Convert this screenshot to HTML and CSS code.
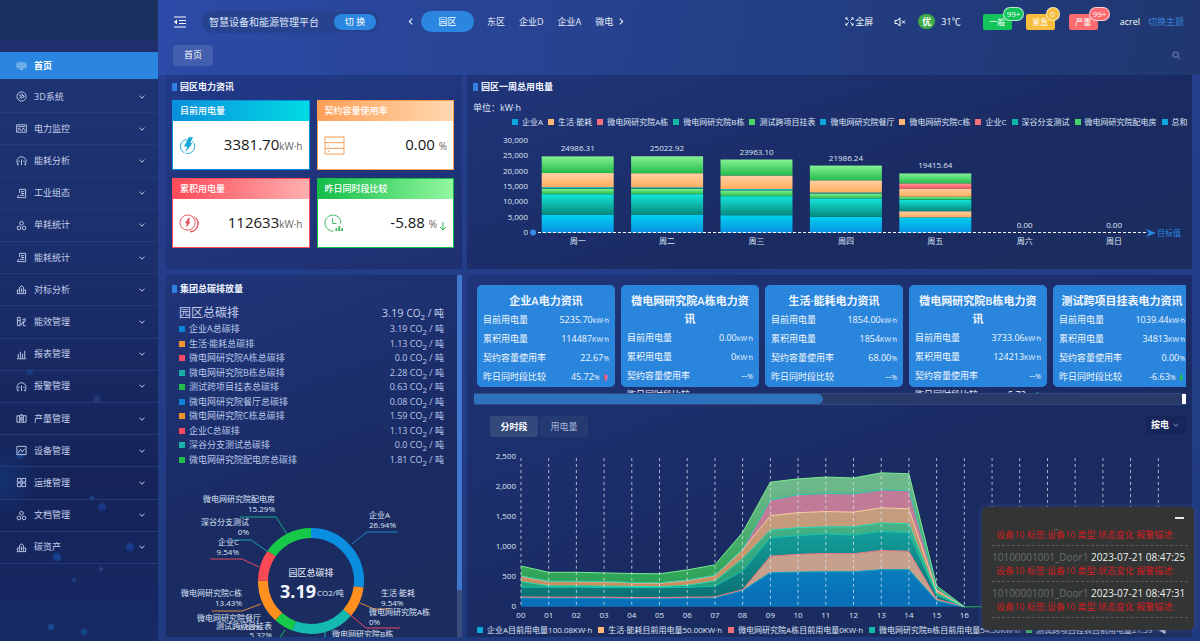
FILE: index.html
```html
<!DOCTYPE html>
<html lang="zh-CN">
<head>
<meta charset="utf-8">
<meta name="viewport" content="width=device-width, initial-scale=1">
<title>智慧设备和能源管理平台</title>
<link rel="stylesheet" href="styles.css">
</head>
<body>
<svg class="defs" aria-hidden="true">
  <symbol id="chev" viewBox="0 0 8 8"><path d="M1.5 2.8 4 5.2 6.500 2.800"/></symbol>
  <symbol id="i-home" viewBox="0 0 12 12"><circle cx="6" cy="6" r="1.500"/><circle cx="6" cy="6" r="3.200"/><path d="M2.300 9.500a5 5 0 0 1 0-7M9.700 9.500a5 5 0 0 0 0-7M4.500 10.500h3"/></symbol>
  <symbol id="i-3d" viewBox="0 0 12 12"><circle cx="6" cy="6" r="5"/><path d="M3 3.800 6 6 3 8.200M5.500 3.800 9 6 5.500 8.200M6 3l3 3"/></symbol>
  <symbol id="i-monitor" viewBox="0 0 12 12"><path d="M.7 2h10.600v8H.7zM2 4h8M2 8.500l2-2.500 2 2.500 2-3 2 3M2 6h1"/></symbol>
  <symbol id="i-gauge" viewBox="0 0 12 12"><path d="M2.500 10.500a5 5 0 1 1 7 0M6 5v6M3.500 6 3 8M8.500 6 9 8M1 10.500h2M9 10.500h2"/></symbol>
  <symbol id="i-doc" viewBox="0 0 12 12"><path d="M4 1.500h6.500v9H1.500L3 7.500M4 1.500v4M5.500 4H9M5.500 6H9M4.500 8H9"/></symbol>
  <symbol id="i-rings" viewBox="0 0 12 12"><circle cx="6" cy="3.500" r="2"/><circle cx="3.200" cy="8.700" r="2"/><circle cx="8.800" cy="8.700" r="2"/></symbol>
  <symbol id="i-people" viewBox="0 0 12 12"><path d="M4 10V3.500L6 2l2 1.500V10M1.500 10V6.500H4M10.500 10V6.500H8M1 10.500h10M6 5v4"/></symbol>
  <symbol id="i-effect" viewBox="0 0 12 12"><path d="M1.500 1.500h3v9h-3zM5 10.500 8.500 5M7 4l3-1v3l-2 1v3.500h2.500M1.500 5h3"/></symbol>
  <symbol id="i-bars" viewBox="0 0 12 12"><path d="M1 10.700h10M2.500 10V5.500M4.800 10V3M7.200 10V5M9.500 10V2"/></symbol>
  <symbol id="i-case" viewBox="0 0 12 12"><path d="M1 3h10v7H1zM4 3v7M8 3v7M5 1.700h2M5.200 5h1.600v3H5.200z"/></symbol>
  <symbol id="i-trend" viewBox="0 0 12 12"><path d="M1 1.500h10v9H1zM2.500 8.500l2.500-4 2 3 2.500-3.500"/></symbol>
  <symbol id="i-grid" viewBox="0 0 12 12"><path d="M1.500 1.500h4v4h-4zM6.500 1.500h4v4h-4zM1.500 6.500h4v4h-4zM6.500 6.500h4v4h-4z"/></symbol>
</svg>
<div class="app">
  <aside class="side">
    <div class="brand"></div>
    <a class="nav-home" href="#"><svg class="ico"><use href="#i-home"/></svg>首页</a>
    <nav class="menu" aria-label="主菜单">
      <a href="#"><svg class="ico"><use href="#i-3d"/></svg><span>3D系统</span><svg class="chev"><use href="#chev"/></svg></a>
      <a href="#"><svg class="ico"><use href="#i-monitor"/></svg><span>电力监控</span><svg class="chev"><use href="#chev"/></svg></a>
      <a href="#"><svg class="ico"><use href="#i-gauge"/></svg><span>能耗分析</span><svg class="chev"><use href="#chev"/></svg></a>
      <a href="#"><svg class="ico"><use href="#i-doc"/></svg><span>工业组态</span><svg class="chev"><use href="#chev"/></svg></a>
      <a href="#"><svg class="ico"><use href="#i-rings"/></svg><span>单耗统计</span><svg class="chev"><use href="#chev"/></svg></a>
      <a href="#"><svg class="ico"><use href="#i-doc"/></svg><span>能耗统计</span><svg class="chev"><use href="#chev"/></svg></a>
      <a href="#"><svg class="ico"><use href="#i-people"/></svg><span>对标分析</span><svg class="chev"><use href="#chev"/></svg></a>
      <a href="#"><svg class="ico"><use href="#i-effect"/></svg><span>能效管理</span><svg class="chev"><use href="#chev"/></svg></a>
      <a href="#"><svg class="ico"><use href="#i-bars"/></svg><span>报表管理</span><svg class="chev"><use href="#chev"/></svg></a>
      <a href="#"><svg class="ico"><use href="#i-gauge"/></svg><span>报警管理</span><svg class="chev"><use href="#chev"/></svg></a>
      <a href="#"><svg class="ico"><use href="#i-case"/></svg><span>产量管理</span><svg class="chev"><use href="#chev"/></svg></a>
      <a href="#"><svg class="ico"><use href="#i-trend"/></svg><span>设备管理</span><svg class="chev"><use href="#chev"/></svg></a>
      <a href="#"><svg class="ico"><use href="#i-grid"/></svg><span>运维管理</span><svg class="chev"><use href="#chev"/></svg></a>
      <a href="#"><svg class="ico"><use href="#i-rings"/></svg><span>文档管理</span><svg class="chev"><use href="#chev"/></svg></a>
      <a href="#"><svg class="ico"><use href="#i-people"/></svg><span>碳资产</span><svg class="chev"><use href="#chev"/></svg></a>
    </nav>
  </aside>

  <div class="main">
    <header class="top">
      <button class="plain" aria-label="折叠菜单"><svg class="burger" viewBox="0 0 14 12"><path d="M1 1h12M6 4.500h7M6 7.500h7M1 11h12"/><path class="solid" d="M4 3.500v5L1 6z"/></svg></button>
      <div class="platform"><span>智慧设备和能源管理平台</span><button class="switch">切 换</button></div>
      <div class="areas">
        <button class="plain" aria-label="上一个"><svg class="arrow" viewBox="0 0 8 8"><path d="M5.500 1.500 3 4l2.500 2.500"/></svg></button>
        <button class="area on">园区</button>
        <button class="area">东区</button>
        <button class="area">企业D</button>
        <button class="area">企业A</button>
        <button class="area cut">微电</button>
        <button class="plain" aria-label="下一个"><svg class="arrow" viewBox="0 0 8 8"><path d="M2.500 1.500 5 4 2.500 6.500"/></svg></button>
      </div>
      <div class="tools">
        <button class="plain full"><svg class="t-ico" viewBox="0 0 10 10"><path d="M1 3V1h2M7 1h2v2M1 7v2h2M7 9h2V7M1 1l3 3M9 1 6 4M1 9l3-3M9 9 6 6"/></svg>全屏</button>
        <button class="plain" aria-label="静音"><svg class="mute" viewBox="0 0 12 10"><path d="M1 3.500h2L6 1v8L3 6.500H1zM8 3.500l3 3M11 3.500l-3 3"/></svg></button>
        <span class="air">优</span><span class="temp">31℃</span>
        <button class="alarm a-green">一般<b>99+</b></button>
        <button class="alarm a-amber">紧急<b>0</b></button>
        <button class="alarm a-red">严重<b>99+</b></button>
        <span class="user">acrel</span>
        <a class="theme" href="#">切换主题</a>
      </div>
    </header>
    <div class="tabs">
      <button class="page-tab">首页</button>
      <button class="plain" aria-label="搜索"><svg class="search" viewBox="0 0 10 10"><circle cx="4" cy="4" r="3"/><path d="m6.200 6.200 3 3"/></svg></button>
    </div>

    <main class="board">
      <section class="panel power">
        <h2>园区电力资讯</h2>
        <div class="stats">
          <article class="stat s-blue"><h3>目前用电量</h3><div class="body">
            <svg class="s-ico" viewBox="0 0 20 20"><circle cx="9" cy="11" r="7.500"/><path class="fill" stroke="#fff" d="M10 .8h5.500L12.500 7H15L6 19l2-7.500H4.500z"/></svg>
            <p>3381.70<small>kW·h</small></p></div></article>
          <article class="stat s-orange"><h3>契约容量使用率</h3><div class="body">
            <svg class="s-ico big" viewBox="0 0 22 20"><path d="M1 1h20v18H1zM1 7h20M1 13h20M4 10h1M4 16h2"/></svg>
            <p>0.00 <small>%</small></p></div></article>
          <article class="stat s-red"><h3>累积用电量</h3><div class="body">
            <svg class="s-ico big" viewBox="0 0 22 20"><circle cx="9" cy="9" r="8"/><path d="M16 3a8.500 8.500 0 0 1-4.500 15.500M18 4a9 9 0 0 1-6 15"/><path class="fill" d="M10 4.500 7 9.500h2L8 13l3.500-4.500h-2L11 4.500z"/></svg>
            <p>112633<small>kW·h</small></p></div></article>
          <article class="stat s-green"><h3>昨日同时段比较</h3><div class="body">
            <svg class="s-ico big" viewBox="0 0 22 20"><path d="M10 18A8.500 8.500 0 1 1 17.500 7M17.500 7v3M9 4.500V10h4"/><path class="thick" d="M13 18v-3M16 18v-5M19 18v-3"/></svg>
            <p>-5.88 <small>%</small><svg class="down" viewBox="0 0 8 10"><path d="M4 1v8M1 6l3 3 3-3"/></svg></p></div></article>
        </div>
      </section>

      <section class="panel week">
        <h2>园区一周总用电量</h2>
        <p class="unit">单位：kW·h</p>
        <ul class="legend">
          <li class="c-blue">企业A</li><li class="c-orange">生活·能耗</li><li class="c-red">微电网研究院A栋</li><li class="c-teal">微电网研究院B栋</li><li class="c-green">测试跨项目挂表</li><li class="c-blue">微电网研究院餐厅</li><li class="c-orange">微电网研究院C栋</li><li class="c-red">企业C</li><li class="c-teal">深谷分支测试</li><li class="c-green">微电网研究院配电房</li><li class="c-blue">总和</li>
        </ul>
        <svg id="week" class="chart" viewBox="0 0 713 122" role="img" aria-label="园区一周总用电量"></svg>
      </section>

      <section class="panel carbon">
        <div class="carbon-main">
          <h2>集团总碳排放量</h2>
          <div class="total"><span>园区总碳排</span><span>3.19 <small>CO<sub>2</sub> / 吨</small></span></div>
          <ul class="list">
            <li><i class="k-blue"></i>企业A总碳排<span>3.19 CO<sub>2</sub> / 吨</span></li>
            <li><i class="k-orange"></i>生活·能耗总碳排<span>1.13 CO<sub>2</sub> / 吨</span></li>
            <li><i class="k-red"></i>微电网研究院A栋总碳排<span>0.0 CO<sub>2</sub> / 吨</span></li>
            <li><i class="k-teal"></i>微电网研究院B栋总碳排<span>2.28 CO<sub>2</sub> / 吨</span></li>
            <li><i class="k-green"></i>测试跨项目挂表总碳排<span>0.63 CO<sub>2</sub> / 吨</span></li>
            <li><i class="k-blue"></i>微电网研究院餐厅总碳排<span>0.08 CO<sub>2</sub> / 吨</span></li>
            <li><i class="k-orange"></i>微电网研究院C栋总碳排<span>1.59 CO<sub>2</sub> / 吨</span></li>
            <li><i class="k-red"></i>企业C总碳排<span>1.13 CO<sub>2</sub> / 吨</span></li>
            <li><i class="k-teal"></i>深谷分支测试总碳排<span>0.0 CO<sub>2</sub> / 吨</span></li>
            <li><i class="k-green"></i>微电网研究院配电房总碳排<span>1.81 CO<sub>2</sub> / 吨</span></li>
          </ul>
          <svg id="donut" class="chart donut" viewBox="0 0 285 160" role="img" aria-label="园区总碳排占比"></svg>
        </div>
        <div class="vbar"><div></div></div>
      </section>

      <section class="panel detail">
        <div class="cards">
          <article class="card"><h3>企业A电力资讯</h3><dl>
            <div><dt>目前用电量</dt><dd>5235.70<small>kW·h</small></dd></div><div><dt>累积用电量</dt><dd>114487<small>KW·h</small></dd></div>
            <div><dt>契约容量使用率</dt><dd>22.67<small>%</small></dd></div><div><dt>昨日同时段比较</dt><dd>45.72<small>%</small> <small class="up">⬆</small></dd></div></dl></article>
          <article class="card"><h3>微电网研究院A栋电力资讯</h3><dl>
            <div><dt>目前用电量</dt><dd>0.00<small>kW·h</small></dd></div><div><dt>累积用电量</dt><dd>0<small>KW·h</small></dd></div>
            <div><dt>契约容量使用率</dt><dd>--<small>%</small></dd></div><div><dt>昨日同时段比较</dt><dd>--<small>%</small></dd></div></dl></article>
          <article class="card"><h3>生活·能耗电力资讯</h3><dl>
            <div><dt>目前用电量</dt><dd>1854.00<small>kW·h</small></dd></div><div><dt>累积用电量</dt><dd>1854<small>KW·h</small></dd></div>
            <div><dt>契约容量使用率</dt><dd>68.00<small>%</small></dd></div><div><dt>昨日同时段比较</dt><dd>--<small>%</small></dd></div></dl></article>
          <article class="card"><h3>微电网研究院B栋电力资讯</h3><dl>
            <div><dt>目前用电量</dt><dd>3733.06<small>kW·h</small></dd></div><div><dt>累积用电量</dt><dd>124213<small>KW·h</small></dd></div>
            <div><dt>契约容量使用率</dt><dd>--<small>%</small></dd></div><div><dt>昨日同时段比较</dt><dd>-5.72<small>%</small> <small class="dn">⬇</small></dd></div></dl></article>
          <article class="card"><h3>测试跨项目挂表电力资讯</h3><dl>
            <div><dt>目前用电量</dt><dd>1039.44<small>kW·h</small></dd></div><div><dt>累积用电量</dt><dd>34813<small>KW·h</small></dd></div>
            <div><dt>契约容量使用率</dt><dd>0.00<small>%</small></dd></div><div><dt>昨日同时段比较</dt><dd>-6.63<small>%</small> <small class="dn">⬇</small></dd></div></dl></article>
        </div>
        <div class="hbar"><div class="thumb"></div><div class="corner"></div></div>
        <div class="switches">
          <button class="seg on">分时段</button><button class="seg">用电量</button>
          <div class="pick"><select aria-label="统计方式"><option>按电</option></select><svg class="chev"><use href="#chev"/></svg></div>
        </div>
        <svg id="hours" class="chart hours" viewBox="0 0 713 176" role="img" aria-label="分时段用电量"></svg>
        <ul class="legend hours-legend">
          <li class="c-blue">企业A目前用电量100.08KW·h</li><li class="c-orange">生活·能耗目前用电量50.00KW·h</li><li class="c-red">微电网研究院A栋目前用电量0KW·h</li><li class="c-teal">微电网研究院B栋目前用电量54.50KW·h</li><li class="c-green">测试跨项目挂表目前用电量21.59</li><li class="pager">◀</li>
        </ul>
      </section>
    </main>
  </div>

  <aside class="toast" aria-label="报警信息">
    <button class="min" aria-label="最小化"></button>
    <ul>
      <li><p class="when"><span>_</span></p><p class="msg">设备10 标签:设备10 类型:状态变化 报警描述:</p></li>
      <li><p class="when"><span>10100001001_Door1</span> 2023-07-21 08:47:25</p><p class="msg">设备10 标签:设备10 类型:状态变化 报警描述:</p></li>
      <li><p class="when"><span>10100001001_Door1</span> 2023-07-21 08:47:31</p><p class="msg">设备10 标签:设备10 类型:状态变化 报警描述:</p></li>
    </ul>
  </aside>
</div>
<script src="charts.js"></script>
</body>
</html>
```

FILE: styles.css
```css
* { box-sizing: border-box; }
body, h2, h3, p, ul, dl, dd { margin: 0; padding: 0; }
ul { list-style: none; }
body {
  font: 9px/14px "Open Sans", "Noto Sans CJK SC", sans-serif;
  color: #dfe6f7;
  background: #1f3778;
}
button, select { font: inherit; color: inherit; border: 0; padding: 0; background: none; white-space: nowrap; }
a { color: inherit; text-decoration: none; }
svg { fill: none; stroke: currentColor; flex: none; }
.defs { position: absolute; width: 0; height: 0; }
.plain { display: flex; align-items: center; }

.app { position: relative; display: grid; grid-template: minmax(0, 1fr) / 158px minmax(0, 1fr); height: 100vh; min-height: 600px; overflow: hidden; }

/* sidebar */
.side {
  background:
    radial-gradient(circle at 20px 455px, #1450a890 0 3px, transparent 5px),
    radial-gradient(circle at 30px 372px, #1b4db080 0 2px, transparent 4px),
    radial-gradient(circle at 97px 399px, #3a5aa070 0 2px, transparent 4px),
    radial-gradient(circle at 102px 507px, #1a49a890 0 3px, transparent 5px),
    radial-gradient(circle at 57px 557px, #1a55b890 0 3px, transparent 5px),
    radial-gradient(circle at 130px 547px, #1a55b880 0 3px, transparent 5px),
    radial-gradient(circle at 92px 498px, #2a68b880 0 1px, transparent 3px),
    radial-gradient(circle at 51px 627px, #1568b890 0 2px, transparent 4px),
    radial-gradient(circle at 84px 632px, #1568b880 0 2px, transparent 4px),
    radial-gradient(circle at 74px 580px, #2a58a880 0 1px, transparent 3px),
    radial-gradient(circle at 101px 569px, #4a6aa870 0 1px, transparent 3px),
    radial-gradient(circle at 0 480px, #12408c80, transparent 40px),
    linear-gradient(#1f3575, #1b2f6c 40%, #152358 75%, #172a66);
  color: #c6d0ec;
}
.brand { height: 52px; background: linear-gradient(#1c3060 40px, #20306f 40px); }
.nav-home, .menu a { display: flex; align-items: center; gap: 7px; padding: 0 12px 0 16px; }
.nav-home { height: 27px; background: #2a86e0; color: #fff; font-weight: 600; }
.menu { display: grid; grid-auto-rows: 1fr; min-height: 485px; padding-top: 2px; }
.menu a { border-bottom: 1px solid #243b7a; }
.menu span { flex: 1; }
.ico { width: 11px; height: 11px; stroke-width: 1; }
.nav-home .ico { color: #b5d6f6; }
.chev { width: 8px; height: 8px; }

/* header */
.main {
  display: flex; flex-direction: column; min-width: 0; padding: 0 8px 4px;
  background: linear-gradient(100deg, #2c4ba8 0, #27428f 40%, #213a7a 80%, #20376f) 0 0 / 100% 75px no-repeat, linear-gradient(#263f8f, #203a80);
}
.top { display: flex; align-items: center; height: 43px; padding: 0 7px; white-space: nowrap; }
.burger { width: 14px; height: 12px; stroke-width: 1; color: #fff; }
.solid { fill: currentColor; stroke: none; }
.platform { display: flex; align-items: center; justify-content: space-between; gap: 15px; margin-left: 15px; padding: 3px 3px 3px 7px; border-radius: 11px; background: #27438f; font-size: 10px; line-height: 16px; }
.switch { width: 42px; height: 16px; border-radius: 8px; background: #2a86e0; color: #fff; font-size: 9px; }
.areas { display: flex; align-items: center; margin-left: 27px; color: #e6ecfa; }
.arrow { width: 9px; height: 9px; }
.area { margin: 0 7px; height: 21px; }
.area.on { width: 53px; border-radius: 11px; background: #2a86e0; color: #fff; margin: 0 6px; }
.area.cut { margin-right: 4px; }
.tools { display: flex; align-items: center; margin-left: auto; padding-right: 1px; color: #fff; }
.full { gap: 1px; }
.t-ico { width: 9px; height: 9px; }
.mute { width: 12px; height: 10px; margin: 0 12px 0 21px; }
.air { width: 17px; border-radius: 8px; line-height: 15px; text-align: center; background: #3faa4a; font-weight: 700; }
.temp { margin: 0 22px 0 6px; }
.alarm { position: relative; width: 29px; height: 16px; border-radius: 2px; margin-right: 14px; font-size: 8px; line-height: 16px; }
.alarm b { position: absolute; left: 20px; top: -7px; min-width: 14px; padding: 0 3px; border: 1px solid #ffffffb0; border-radius: 7px; background: inherit; font-size: 8px; font-weight: 400; line-height: 12px; }
.a-green { background: #13c45a; }
.a-amber { background: #f7bd3c; }
.a-red { background: #fb6b70; }
.user { margin: 0 8px; }
.theme { color: #3a80d8; }
.tabs { display: flex; align-items: center; justify-content: space-between; height: 32px; padding: 0 11px 8px 7px; }
.page-tab { width: 40px; height: 21px; border-radius: 4px; background: #435fae; color: #fff; }
.search { width: 9px; height: 9px; color: #8094c4; }

/* board */
.board { flex: 1; min-height: 0; display: grid; grid-template: 194px minmax(0, 1fr) / 296fr 725fr; gap: 6px 5px; }
.panel { min-width: 0; overflow: hidden; background: linear-gradient(160deg, #20357a, #1a2b62 60%, #1c2e5e); }
h2 { display: flex; align-items: center; gap: 3px; height: 14px; font-size: 9px; font-weight: 600; color: #f0f4ff; }
h2::before { content: ""; width: 5px; height: 8px; background: #2f80e0; }
.chart { display: block; width: 100%; }
.chart text { stroke: none; fill: #dfe6f7; font-size: 8px; }

.power { padding: 5px 8px 0 6px; background: linear-gradient(160deg, #213a88, #1f3070); }
.stats { display: grid; grid-template-columns: 1fr 1fr; gap: 8px 7px; margin-top: 6px; }
.stat { background: #fff; border: 1px solid var(--c); }
.stat h3 { height: 20px; padding-left: 7px; line-height: 20px; font-size: 9px; font-weight: 500; color: #fff; background: linear-gradient(90deg, var(--c), var(--d)); }
.stat .body { display: flex; align-items: center; justify-content: space-between; height: 48px; padding: 0 6px; color: var(--i); }
.s-blue { --c: #0a90dc; --d: #02dbe4; --i: #16a8da; }
.s-orange { --c: #ff9f58; --d: #ffd9b0; --i: #f59a4e; }
.s-red { --c: #ff4a58; --d: #ffb0b0; --i: #e85058; }
.s-green { --c: #14bc48; --d: #92f8a0; --i: #3cb85c; }
.s-ico { width: 19px; height: 19px; }
.s-ico.big { width: 21px; }
.fill { fill: currentColor; }
.thick { stroke-width: 2; }
.stat p { font-size: 15px; line-height: 20px; font-weight: 500; color: #161616; }
.stat small { font-size: 10px; font-weight: 400; color: #666; }
.down { width: 8px; height: 10px; margin-left: 2px; vertical-align: -3px; color: #30b455; }

.week { padding: 5px 6px 0; }
.unit { margin-top: 7px; font-size: 9px; }
.legend { display: flex; justify-content: space-between; gap: 5px; padding-left: 39px; font-size: 8px; line-height: 14px; white-space: nowrap; }
.legend li { display: flex; align-items: center; gap: 4px; }
.legend li::before { content: ""; width: 6px; height: 6px; background: var(--m); }
.c-blue { --m: #0aa6dc; }
.c-orange { --m: #ffb676; }
.c-red { --m: #f4707c; }
.c-teal { --m: #10b8a8; }
.c-green { --m: #4ad468; }

.carbon { display: flex; justify-content: space-between; }
.carbon-main { flex: 1; min-width: 0; padding: 7px 0 0 6px; }
.total { display: flex; justify-content: space-between; padding: 0 13px 0 7px; margin-top: 8px; line-height: 18px; color: #c6d0ec; }
.total small { font-size: 10px; }
.total span { font-size: 11px; }
.total span:first-child { font-size: 12px; }
.list { display: grid; grid-auto-rows: 1fr; min-height: 145px; padding: 0 13px 0 7px; color: #b9c7ea; }
.list li { display: flex; align-items: center; gap: 4px; line-height: 12px; }
.list i { width: 6px; height: 6px; background: var(--m); }
.list span { margin-left: auto; }
sub { line-height: 0; font-size: 8px; vertical-align: -3px; }
.k-blue { --m: #0a84d4; }
.k-orange { --m: #f59030; }
.k-red { --m: #f84a60; }
.k-teal { --m: #18b0a8; }
.k-green { --m: #20bc4c; }
.vbar { width: 5px; background: #3c4c7c; }
.vbar div { height: 87%; background: #3f78cc; }
.donut { margin-top: 16px; }
.chart .big { font-size: 18px; font-weight: 700; fill: #f2f5ff; }
.chart .mid { font-size: 9px; fill: #f2f5ff; }

.detail { display: flex; flex-direction: column; padding: 10px 6px 0 7px; }
.cards { display: flex; gap: 6px; height: 108px; padding-left: 3px; overflow: hidden; flex: none; }
.card { flex: 0 0 138px; height: 102px; border-radius: 5px; padding: 7px 6px 0; background: #2a86dc; color: #f2f7ff; }
.card h3 { text-align: center; font-size: 11px; line-height: 18px; font-weight: 600; }
.card dl { display: grid; padding-top: 1px; }
.card dl div { display: flex; justify-content: space-between; white-space: nowrap; line-height: 18px; height: 19px; }
.card dd { font-size: 9px; }
.card small { font-size: 7px; }
.card .up { color: #ff5a78; }
.card .dn { color: #18c060; }
.hbar { display: flex; justify-content: space-between; height: 12px; flex: none; border: solid #344a82; border-width: 1px 0; background: #283a68; }
.thumb { width: 49%; border-radius: 0 6px 6px 0; background: #2c72bc; }
.corner { width: 4px; background: #fff; }
.switches { display: flex; gap: 2px; padding: 11px 0 0 16px; flex: none; }
.seg { width: 48px; height: 21px; border-radius: 3px; background: #263a72; color: #a8b6da; }
.seg.on { background: #34487c; color: #fff; font-weight: 600; }
.pick { position: relative; display: flex; align-items: center; margin-left: auto; width: 40px; height: 18px; background: #16265a; padding-left: 5px; }
.pick select { appearance: none; width: 32px; color: #fff; font-weight: 600; }
.pick .chev { position: absolute; right: 6px; color: #8c9cc6; pointer-events: none; }
.hours { margin-top: 10px; }
.hours-legend { justify-content: flex-start; gap: 6px; padding-left: 3px; }
.hours-legend .pager { margin-left: auto; padding-right: 25px; }
.hours-legend .pager::before { display: none; }

/* alarm list above the board */
.toast { position: absolute; right: 6px; bottom: 11px; width: 212px; padding: 5px 6px 12px 10px; border-radius: 5px; background: #333534; box-shadow: 0 0 6px #39477e; overflow: hidden; white-space: nowrap; }
.min { display: block; width: 9px; height: 7px; margin: 0 4px 2px auto; border-bottom: 2px solid #e8e8e8; }
.toast li { height: 36px; border-bottom: 1px dashed #5c5e5d; }
.toast li:first-child { height: 25px; }
.toast li:first-child .when { height: 8px; line-height: 0; padding-left: 62px; }
.when { padding-top: 3px; line-height: 16px; font-size: 10px; color: #f0f0f0; }
.when span { color: #68706c; }
.msg { padding-left: 4px; line-height: 12px; font-size: 9px; color: #d01c22; }
```

FILE: charts.js
```javascript
const NS = 'http://www.w3.org/2000/svg';
function add(parent, tag, attrs, text) {
  const el = document.createElementNS(NS, tag);
  for (const k in attrs) el.setAttribute(k, attrs[k]);
  if (text !== undefined) el.textContent = text;
  parent.appendChild(el);
  return el;
}
function gradient(svg, id, from, to, y1, y2) {
  const attrs = y1 === undefined
    ? { id, x1: 0, y1: 0, x2: 0, y2: 1 }
    : { id, gradientUnits: 'userSpaceOnUse', x1: 0, y1, x2: 0, y2 };
  const g = add(svg, 'linearGradient', attrs);
  add(g, 'stop', { offset: 0, 'stop-color': from });
  add(g, 'stop', { offset: 1, 'stop-color': to });
}

// Weekly stacked bars
(function () {
  const svg = document.getElementById('week');
  gradient(svg, 'wb', '#00d2f0', '#0a90e0');
  gradient(svg, 'wt', '#14e6dc', '#078a7c');
  gradient(svg, 'wg', '#86f294', '#24bc4c');
  gradient(svg, 'wo', '#ffd0a4', '#ffae5e');
  gradient(svg, 'wr', '#ff9a9a', '#fb5260');
  const zero = 104, k = 92 / 30000, left = 60, step = 89.4;
  for (let v = 0; v <= 30000; v += 5000)
    add(svg, 'text', { x: 55, y: zero - v * k + 2, 'text-anchor': 'end' }, v.toLocaleString('en-US'));
  const days = [
    ['周一', '24986.31', 24986, [['b', 6000], ['t', 6650], ['g', 1800], ['t', 500], ['o', 4600], ['g', 5436]]],
    ['周二', '25022.92', 25023, [['b', 6000], ['t', 6650], ['g', 1800], ['t', 450], ['o', 4600], ['g', 5523]]],
    ['周三', '23963.10', 23963, [['b', 5800], ['t', 6200], ['g', 1900], ['t', 450], ['o', 4400], ['g', 5213]]],
    ['周四', '21986.24', 21986, [['b', 5300], ['t', 6000], ['g', 1600], ['t', 300], ['o', 4000], ['g', 4786]]],
    ['周五', '19415.64', 19416, [['b', 5100], ['o', 2000], ['t', 3800], ['g', 1000], ['o', 2600], ['r', 1700], ['g', 3216]]],
    ['周六', '0.00', 0, []],
    ['周日', '0.00', 0, []]
  ];
  days.forEach(([name, label, total, parts], i) => {
    const cx = left + step * (i + 0.5);
    let y = zero;
    parts.forEach(([c, v]) => {
      y -= v * k;
      add(svg, 'rect', { x: cx - 36, y, width: 72, height: v * k, fill: `url(#w${c})`, stroke: 'none' });
    });
    add(svg, 'text', { x: cx, y: zero - total * k - 5, 'text-anchor': 'middle' }, label);
    add(svg, 'text', { x: cx, y: zero + 11, 'text-anchor': 'middle' }, name);
  });
  add(svg, 'path', { d: `M60 ${zero - 0.5}H675`, stroke: '#fff', 'stroke-dasharray': '3 2' });
  add(svg, 'circle', { cx: 60, cy: zero - 0.5, r: 3, fill: '#3a8ae8', stroke: 'none' });
  add(svg, 'path', { d: `M673 ${zero - 4}l10 4-10 4 3-4z`, fill: '#2a86e0', stroke: 'none' });
  add(svg, 'text', { x: 684, y: zero + 3, style: 'fill:#2a86e0' }, '目标值');
})();

// Hourly stacked areas
(function () {
  const svg = document.getElementById('hours');
  const zero = 160, k = 150 / 2500, left = 47, step = 27.75;
  const tops = [
    [150, 145, 145, 145, 140, 140, 145, 150, 270, 570, 580, 585, 585, 620, 620, 100, 0],
    [165, 160, 160, 160, 155, 155, 160, 165, 285, 845, 875, 890, 885, 940, 925, 130, 0],
    [330, 325, 325, 322, 320, 320, 325, 345, 600, 1150, 1190, 1215, 1195, 1260, 1235, 190, 0],
    [420, 350, 350, 345, 340, 335, 360, 430, 800, 1280, 1320, 1335, 1335, 1400, 1385, 225, 0],
    [510, 420, 420, 415, 400, 395, 440, 520, 950, 1520, 1570, 1590, 1580, 1650, 1635, 270, 0],
    [515, 425, 425, 420, 405, 400, 445, 525, 960, 1780, 1870, 1890, 1885, 1950, 1940, 310, 0],
    [680, 575, 575, 565, 555, 550, 615, 700, 1240, 2080, 2135, 2165, 2150, 2235, 2220, 350, 0]
  ];
  const fills = [
    ['#08a4c8', '#0870b8'], ['#c6a08c', '#c6a08c'], ['#18bcb4', '#0c7276'],
    ['#5cbc8e', '#1f9c78'], ['#c2a28c', '#cc8c58'], ['#c07c96', '#c07c96'], ['#6cb88a', '#22a04c']
  ];
  const strokes = ['#10a8c4', '#f07884', '#14c8b0', '#28e0b8', '#ffd0a0', '#30c8b8', '#78ec90'];
  const px = i => (left + i * step).toFixed(1);
  const py = v => (zero - v * k).toFixed(1);
  tops.forEach((row, n) => {
    gradient(svg, 'h' + n, fills[n][0], fills[n][1], 40, 150);
    const base = n ? tops[n - 1] : row.map(() => 0);
    const up = row.map((v, i) => `${px(i)},${py(v)}`);
    const back = base.map((v, i) => `${px(i)},${py(v)}`).reverse();
    add(svg, 'polygon', { points: up.concat(back).join(' '), fill: `url(#h${n})`, stroke: 'none' });
  });
  tops.forEach((row, n) => add(svg, 'polyline', { points: row.map((v, i) => `${px(i)},${py(v)}`).join(' '), stroke: strokes[n] }));
  for (let i = 0; i < 24; i++) {
    add(svg, 'path', { d: `M${px(i)} 11V${zero}`, stroke: '#dfe6f7', 'stroke-opacity': 0.75, 'stroke-dasharray': '3 3' });
    add(svg, 'text', { x: px(i), y: zero + 11, 'text-anchor': 'middle' }, String(i).padStart(2, '0'));
  }
  add(svg, 'path', { d: `M${px(16)} ${zero}H${px(23)}`, stroke: '#28b860' });
  for (let v = 0; v <= 2500; v += 500)
    add(svg, 'text', { x: 42, y: zero - v * k + 2, 'text-anchor': 'end' }, v.toLocaleString('en-US'));
})();

// Carbon share ring
(function () {
  const svg = document.getElementById('donut');
  const cx = 139, cy = 98, r = 48;
  const shares = [[26.94, '#0a8ee0'], [9.54, '#ff9020'], [19.25, '#14bab0'], [6.01, '#18c848'], [13.43, '#ff9020'], [9.54, '#fb4a54'], [15.29, '#18c848']];
  const pt = p => {
    const a = p / 100 * 2 * Math.PI;
    return `${(cx + r * Math.sin(a)).toFixed(2)} ${(cy - r * Math.cos(a)).toFixed(2)}`;
  };
  let at = 0;
  shares.forEach(([p, c]) => {
    add(svg, 'path', { d: `M${pt(at)}A${r} ${r} 0 0 1 ${pt(at + p)}`, stroke: c, 'stroke-width': 10 });
    at += p;
  });
  const leads = [
    ['M180 61 195 49H226', '#1a84c8'], ['M188 120l14 6h16', '#e08a3c'], ['M176 130l18 15h34', '#f04a60'],
    ['M153 149v10', '#14bab0'], ['M115 51 104 34H68', '#18a888'], ['M96 69 79 57H60', '#18a0a8'],
    ['M87 84 70 76H38', '#e04a60'], ['M89 121 70 128H40', '#e08a3c'], ['M113 147l-8 12', '#18b860']
  ];
  leads.forEach(([d, stroke]) => add(svg, 'path', { d, stroke }));
  const notes = [
    [197, 35, 'start', '企业A'], [197, 45, 'start', '26.94%'],
    [209, 113, 'start', '生活·能耗'], [209, 123, 'start', '9.54%'],
    [197, 132, 'start', '微电网研究院A栋'], [197, 142, 'start', '0%'],
    [160, 154, 'start', '微电网研究院B栋'],
    [103, 19, 'end', '微电网研究院配电房'], [103, 29, 'end', '15.29%'],
    [77, 42, 'end', '深谷分支测试'], [77, 52, 'end', '0%'],
    [67, 62, 'end', '企业C'], [67, 72, 'end', '9.54%'],
    [70, 113, 'end', '微电网研究院C栋'], [70, 123, 'end', '13.43%'],
    [89, 138, 'end', '微电网研究院餐厅'], [89, 147, 'end', '0.68%'],
    [100, 146, 'end', '测试跨项目挂表'], [100, 155, 'end', '5.32%']
  ];
  notes.forEach(([x, y, anchor, t]) => add(svg, 'text', { x, y, 'text-anchor': anchor }, t));
  add(svg, 'text', { x: cx, y: 93, class: 'mid', 'text-anchor': 'middle' }, '园区总碳排');
  add(svg, 'text', { x: 108, y: 115, class: 'big' }, '3.19');
  add(svg, 'text', { x: 145, y: 113 }, 'CO2/吨');
})();
```
